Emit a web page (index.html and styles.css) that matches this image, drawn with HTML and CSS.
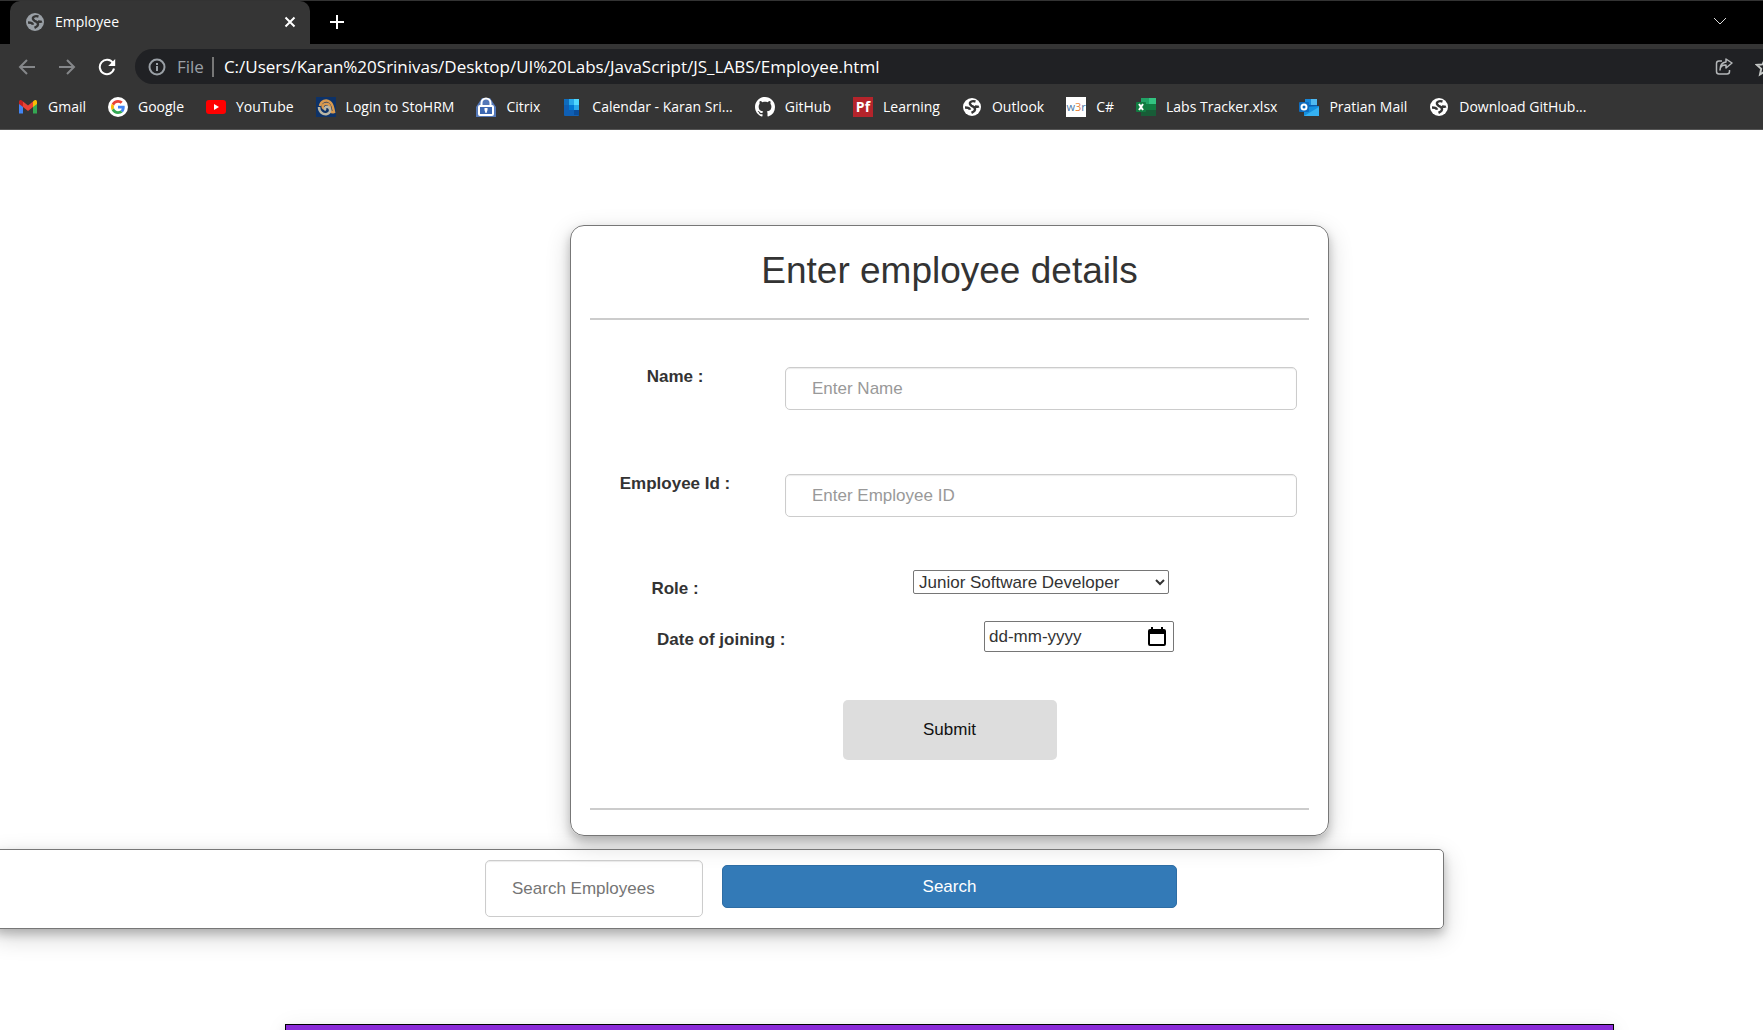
FILE: index.html
```html
<!DOCTYPE html>
<html lang="en">
<head>
<meta charset="utf-8">
<title>Employee</title>
<link rel="stylesheet" href="styles.css">
</head>
<body>
<svg class="sprite" aria-hidden="true">
  <symbol id="globe" viewBox="0 0 20 20">
    <circle cx="10" cy="10" r="9" fill="currentColor"/>
    <path class="cut" d="M13.500 4.500C8.500 3 6 6.500 9.500 8.800c4.500 1.700 5 4.700 0 7M3 10.500c2.500 0 4.500.3 5 2.200M17 9.500c-1.500.6-3 .3-4-.8"/>
  </symbol>
</svg>

<header class="browser">
  <div class="tabs">
    <div class="tab">
      <svg class="icon tab-globe"><use href="#globe"/></svg>
      <span class="tab-title">Employee</span>
      <button class="plain" aria-label="Close tab"><svg width="12" height="12" viewBox="0 0 12 12"><path d="M1.500 1.500l9 9M10.500 1.500l-9 9" stroke="#fff" stroke-width="2"/></svg></button>
    </div>
    <button class="plain new-tab" aria-label="New tab"><svg width="16" height="16" viewBox="0 0 16 16"><path d="M8 1v14M1 8h14" stroke="#fff" stroke-width="2"/></svg></button>
    <button class="plain tab-search" aria-label="Search tabs"><svg width="14" height="8" viewBox="0 0 14 8"><path d="M1 1l6 6 6-6" fill="none" stroke="#ddd"/></svg></button>
  </div>

  <div class="toolbar">
    <button class="plain" aria-label="Back"><svg width="18" height="18" viewBox="0 0 18 18"><path d="M17 9H2M9 2L2 9l7 7" fill="none" stroke="#85878a" stroke-width="2"/></svg></button>
    <button class="plain" aria-label="Forward"><svg width="18" height="18" viewBox="0 0 18 18"><path d="M1 9h15M9 2l7 7-7 7" fill="none" stroke="#85878a" stroke-width="2"/></svg></button>
    <button class="plain" aria-label="Reload"><svg width="18" height="18" viewBox="0 0 18 18"><path d="M15 5a7.200 7.200 0 1 0 1 5.600" fill="none" stroke="#fff" stroke-width="2"/><path d="M17.200 1v7h-7z" fill="#fff"/></svg></button>
    <div class="omnibox">
      <svg width="18" height="18" viewBox="0 0 18 18"><circle cx="9" cy="9" r="7.500" fill="none" stroke="#9aa0a6" stroke-width="2"/><path d="M9 8v5M9 5v2" stroke="#9aa0a6" stroke-width="2"/></svg>
      <span class="scheme">File</span>
      <input class="url" aria-label="Address" value="C:/Users/Karan%20Srinivas/Desktop/UI%20Labs/JavaScript/JS_LABS/Employee.html">
      <button class="plain" aria-label="Share"><svg width="18" height="18" viewBox="0 0 18 18"><path d="M7 3H4Q1.500 3 1.500 5.500v8Q1.500 16 4 16h8q2.500 0 2.500-2.500V12M5 12c0-3.500 2-5 6-5v3l6-5-6-4v3C7 4.500 5 8 5 12z" fill="none" stroke="#b4b7b9" stroke-width="1.500" stroke-linejoin="round"/></svg></button>
      <button class="plain star" aria-label="Bookmark this page"><svg width="20" height="20" viewBox="0 0 20 20"><path d="M10 2l2.400 5.400 5.600.5-4.200 3.900 1.200 5.700-5-3-5 3 1.200-5.700L2 7.900l5.600-.5z" fill="none" stroke="#c4c7c5" stroke-width="2"/></svg></button>
    </div>
  </div>

  <nav class="bookmarks" aria-label="Bookmarks">
    <a href="#"><svg class="icon" viewBox="0 0 20 20"><path d="M1 5v11.500h4V9z" fill="#4285f4"/><path d="M19 5v11.500h-4V9z" fill="#34a853"/><path d="M5 4.500l5 4 5-4V10l-5 4-5-4z" fill="#ea4335"/><path d="M1 6V5c0-2 2-2.500 3.200-1.300L5 4.500V10L1 7z" fill="#c5221f"/><path d="M19 6V5c0-2-2-2.500-3.200-1.300L15 4.500V10l4-3z" fill="#fbbc04"/></svg>Gmail</a>
    <a href="#"><svg class="icon" viewBox="0 0 20 20"><circle cx="10" cy="10" r="10" fill="#fff"/><svg x="3" y="3" width="14" height="14" viewBox="0 0 48 48"><path fill="#ea4335" d="M24 9.500c3.540 0 6.710 1.220 9.210 3.600l6.850-6.850C35.900 2.380 30.470 0 24 0 14.620 0 6.510 5.380 2.560 13.220l7.980 6.190C12.430 13.720 17.740 9.500 24 9.500z"/><path fill="#4285f4" d="M46.980 24.550c0-1.570-.15-3.090-.38-4.550H24v9.020h12.940c-.58 2.960-2.260 5.480-4.780 7.180l7.730 6c4.510-4.180 7.090-10.360 7.090-17.650z"/><path fill="#fbbc05" d="M10.530 28.590c-.48-1.450-.76-2.990-.76-4.590s.27-3.140.76-4.590l-7.980-6.190C.92 16.460 0 20.120 0 24c0 3.880.92 7.540 2.560 10.780l7.970-6.190z"/><path fill="#34a853" d="M24 48c6.480 0 11.930-2.130 15.890-5.810l-7.730-6c-2.150 1.450-4.920 2.300-8.160 2.300-6.260 0-11.570-4.220-13.470-9.910l-7.980 6.190C6.510 42.620 14.620 48 24 48z"/></svg></svg>Google</a>
    <a href="#"><svg class="icon" viewBox="0 0 20 20"><rect y="3" width="20" height="14" rx="3" fill="#f00"/><path d="M8 7l5 3-5 3z" fill="#fff"/></svg>YouTube</a>
    <a href="#"><svg class="icon" viewBox="0 0 20 20"><rect width="20" height="20" fill="#0d3268"/><path d="M4 9c1-5 6-7 10-4 3 2 3 6 4 10-3 1-4-1-4-4s-2-5-5-4-3 4-1 5" fill="none" stroke="#d99a4e" stroke-width="2.500"/><path d="M3 10c0 5 4 8 8 7s4-6 1-7-4 2-2 3" fill="none" stroke="#b9b5a4" stroke-width="2.500"/></svg>Login to StoHRM</a>
    <a href="#"><svg class="icon" viewBox="0 0 20 20"><path d="M2 7l4-6h8l4 6 2 3v10H0V10z" fill="#5478b8"/><path d="M5.500 8V6a4.500 4.500 0 0 1 9 0v2" fill="none" stroke="#fff" stroke-width="2"/><rect x="3" y="9" width="14" height="9" rx="1" fill="#3d68b2" stroke="#fff" stroke-width="2"/><path d="M8.500 11h3v2l-1 3h-1l-1-3z" fill="#fff"/></svg>Citrix</a>
    <a href="#"><svg class="icon" viewBox="0 0 20 20"><rect x="2" y="2" width="15" height="17" rx="1" fill="#0f5fb4"/><path d="M2 2h5v6H2z" fill="#0f6cbd"/><path d="M7 2h10v11h-5V8H7z" fill="#28a8ea"/><path d="M12 2h5v6h-5z" fill="#50d9ff"/><path d="M7 8h5v5H7z" fill="#0078d4"/><path d="M12 13h5v5h-5z" fill="#0a4d9a"/></svg>Calendar - Karan Sri...</a>
    <a href="#"><svg class="icon" viewBox="0 0 16 16"><path fill="#fff" d="M8 0C3.580 0 0 3.580 0 8c0 3.540 2.290 6.530 5.470 7.590.4.070.55-.17.55-.38 0-.19-.01-.82-.01-1.490-2.010.37-2.530-.49-2.690-.94-.09-.23-.48-.94-.82-1.130-.28-.15-.68-.52-.01-.53.63-.01 1.080.58 1.230.82.72 1.210 1.870.87 2.330.66.07-.52.28-.87.51-1.070-1.780-.2-3.640-.89-3.640-3.950 0-.87.31-1.590.82-2.150-.08-.2-.36-1.020.08-2.120 0 0 .67-.21 2.200.82.64-.18 1.320-.27 2-.27s1.360.09 2 .27c1.530-1.040 2.200-.82 2.200-.82.44 1.100.16 1.920.08 2.120.51.56.82 1.270.82 2.150 0 3.070-1.870 3.750-3.650 3.950.29.25.54.73.54 1.480 0 1.070-.01 1.930-.01 2.200 0 .21.15.46.55.38A8.010 8.010 0 0 0 16 8c0-4.420-3.580-8-8-8z"/></svg>GitHub</a>
    <a href="#"><span class="icon badge-pf" aria-hidden="true">Pf</span>Learning</a>
    <a href="#"><svg class="icon"><use href="#globe"/></svg>Outlook</a>
    <a href="#"><span class="icon badge-w3r" aria-hidden="true">w<b>3</b>r</span>C#</a>
    <a href="#"><svg class="icon" viewBox="0 0 20 20"><path d="M5 1h15v18H5z" fill="#107c41"/><path d="M5 1h8v6H5z" fill="#21a366"/><path d="M13 1h7v6h-7z" fill="#33c481"/><path d="M5 13h15v6H5z" fill="#185c37"/><rect y="5" width="10" height="10" rx="1" fill="#107c41"/><path d="M3 7l4 6M7 7l-4 6" stroke="#fff" stroke-width="2"/></svg>Labs Tracker.xlsx</a>
    <a href="#"><svg class="icon" viewBox="0 0 20 20"><path d="M6 2h12v12H6z" fill="#0a5cad"/><path d="M12 2h6v6h-6z" fill="#50b9f0"/><path d="M6 2h6v6H6z" fill="#1687d9"/><path d="M5 10l15-1v10H5z" fill="#1490df"/><path d="M5 19l15-9v9z" fill="#35b1f2"/><rect y="5" width="10" height="10" rx="1" fill="#0f6cbd"/><circle cx="5" cy="10" r="2.500" fill="none" stroke="#fff" stroke-width="2"/></svg>Pratian Mail</a>
    <a href="#"><svg class="icon"><use href="#globe"/></svg>Download GitHub...</a>
  </nav>
</header>

<main class="page">
  <form class="card">
    <h1>Enter employee details</h1>
    <hr>
    <div class="fields">
      <div class="row">
        <label for="name">Name :</label>
        <input class="text-box" id="name" placeholder="Enter Name">
      </div>
      <div class="row">
        <label for="empid">Employee Id :</label>
        <input class="text-box" id="empid" placeholder="Enter Employee ID">
      </div>
      <div class="row role-row">
        <label for="role">Role :</label>
        <select id="role"><option>Junior Software Developer</option></select>
      </div>
      <div class="date-row">
        <label for="joined">Date of joining :</label>
        <div class="date-box">
          <input id="joined" placeholder="dd-mm-yyyy">
          <button type="button" class="plain" aria-label="Pick a date"><svg width="18" height="19" viewBox="0 0 18 19"><path d="M3 0h2v2h8V0h2v2h1q2 0 2 2v13q0 2-2 2H2q-2 0-2-2V4q0-2 2-2h1zM2 7v10h14V7z" fill="#000" fill-rule="evenodd"/></svg></button>
        </div>
      </div>
    </div>
    <button class="submit" type="submit">Submit</button>
    <hr>
  </form>

  <form class="search">
    <input class="search-box" aria-label="Search Employees" placeholder="Search Employees">
    <button class="search-button" type="submit">Search</button>
  </form>

  <section class="results" aria-label="Employees"></section>
</main>
</body>
</html>
```

FILE: styles.css
```css
* { box-sizing: border-box; }

body {
  margin: 0;
  height: 100vh;
  display: flex;
  flex-direction: column;
  overflow: hidden;
  background: #fff;
  color: #333;
  font: 17px/24px "Liberation Sans", Arial, sans-serif;
}

input, select, button { font: inherit; color: inherit; }

.sprite { position: absolute; width: 0; height: 0; }
.cut { fill: none; stroke: #353535; stroke-width: 2.4; }

.plain {
  display: flex;
  padding: 0;
  border: 0;
  background: none;
}

.icon { width: 20px; height: 20px; flex: none; }

/* Browser frame */
.browser {
  background: #353535;
  border-bottom: 1px solid #555;
  color: #fff;
  font-family: "Open Sans", "Noto Sans", sans-serif;
  font-size: 14px;
}

.tabs {
  display: flex;
  align-items: center;
  height: 44px;
  padding: 0 36px 4px 10px;
  border-top: 1px solid #333;
  background: #000;
}

.tab {
  align-self: flex-start;
  display: flex;
  align-items: center;
  gap: 10px;
  width: 300px;
  height: 43px;
  padding: 0 14px 2px 15px;
  border-radius: 10px 10px 0 0;
  background: #353535;
}

.tab-globe { color: #9aa0a6; }
.tab-title { flex: 1; }
.new-tab { margin: 2px 0 0 19px; }
.tab-search { margin-left: auto; }

.toolbar {
  display: flex;
  align-items: center;
  gap: 22px;
  height: 45px;
  padding-left: 18px;
}

.omnibox {
  flex: 1;
  display: flex;
  align-items: center;
  height: 35px;
  margin-left: -3px;
  padding-left: 13px;
  border-radius: 18px 0 0 18px;
  background: #202124;
  font-size: 17px;
}

.scheme {
  margin-left: 11px;
  padding-right: 8px;
  border-right: 2px solid #777;
  color: #9aa0a6;
  line-height: 20px;
}

.url {
  flex: 1;
  min-width: 0;
  padding: 0 0 0 10px;
  border: 0;
  outline: 0;
  background: none;
}

.star { margin: 0 -12px 0 22px; }

.bookmarks {
  display: flex;
  gap: 22px;
  height: 40px;
  padding: 6px 18px 0;
}

.bookmarks a {
  display: flex;
  align-items: center;
  gap: 10px;
  height: 24px;
  color: #fff;
  text-decoration: none;
  white-space: nowrap;
}

.badge-pf, .badge-w3r {
  line-height: 20px;
  text-align: center;
}
.badge-pf { background: #b5242b; font-weight: 700; }
.badge-w3r { background: #fff; color: #4a78a8; font-size: 11px; }
.badge-w3r b { color: #e8833a; font-weight: 400; }

/* The content is centred right of the middle of the window */
.page {
  flex: 1;
  display: flex;
  flex-direction: column;
  min-height: 0;
  padding: 95px 0 0 136px;
}

.card, .search, .results {
  box-shadow: 0 5px 10px rgba(0, 0, 0, .2), 0 8px 25px rgba(0, 0, 0, .19);
}

.card {
  flex: none;
  width: 100%;
  max-width: 759px;
  margin: 0 auto;
  padding: 24px 19px 25px;
  border: 1px solid #777;
  border-radius: 14px;
}

h1 {
  margin: 0 0 26px;
  font-size: 37px;
  font-weight: 400;
  line-height: 42px;
  text-align: center;
}

hr {
  height: 2px;
  margin: 0;
  border: 0;
  background: #ccc;
}

.fields {
  display: grid;
  grid-template-rows: 107px 96px 51px 31px;
  padding: 47px 12px 48px 0;
}

.row {
  display: grid;
  grid-template-columns: 170px 1fr;
  gap: 25px;
}

.row label {
  line-height: 20px;
  font-weight: 700;
  text-align: center;
}

.role-row label { padding-top: 9px; }

.text-box, .search-box {
  height: 43px;
  padding: 0 26px;
  border: 1px solid #ccc;
  border-radius: 5px;
  background: none;
  box-shadow: inset 0 1px 1px rgba(0, 0, 0, .08);
}
.text-box::placeholder { color: #999; opacity: 1; }

select {
  width: 256px;
  height: 24px;
  margin: 0 auto;
  padding: 0 1px;
  border: 1px solid #767676;
  border-radius: 2px;
  background: #fff;
}

.date-row {
  display: flex;
  justify-content: space-between;
  padding: 0 123px 0 67px;
}

.date-row label { padding-top: 7px; font-weight: 700; }

.date-box {
  display: flex;
  align-items: center;
  width: 190px;
  height: 31px;
  padding: 0 7px 0 4px;
  border: 1px solid #767676;
  border-radius: 2px;
}

.date-box input {
  flex: 1;
  min-width: 0;
  padding: 0;
  border: 0;
  background: none;
}
.date-box input::placeholder { color: #333; opacity: 1; }

.submit {
  display: block;
  width: 214px;
  height: 60px;
  margin: 0 auto 48px;
  border: 0;
  border-radius: 5px;
  background: #ddd;
  color: #111;
}

.search {
  flex: none;
  display: flex;
  gap: 19px;
  height: 80px;
  margin: 13px 319px 95px -142px;
  padding: 10px 0 0 490px;
  border: 1px solid #777;
  border-radius: 5px;
}

.search-box { width: 218px; height: 57px; }
.search-box::placeholder { color: #757575; opacity: 1; }

.search-button {
  width: 455px;
  height: 43px;
  margin-top: 5px;
  border: 1px solid #2e6da4;
  border-radius: 5px;
  background: #337ab7;
  color: #fff;
}

.results {
  flex: 1;
  margin: 0 149px;
  border: 1px solid #000;
  border-bottom: 0;
  background: #8a2bd8;
}
```
